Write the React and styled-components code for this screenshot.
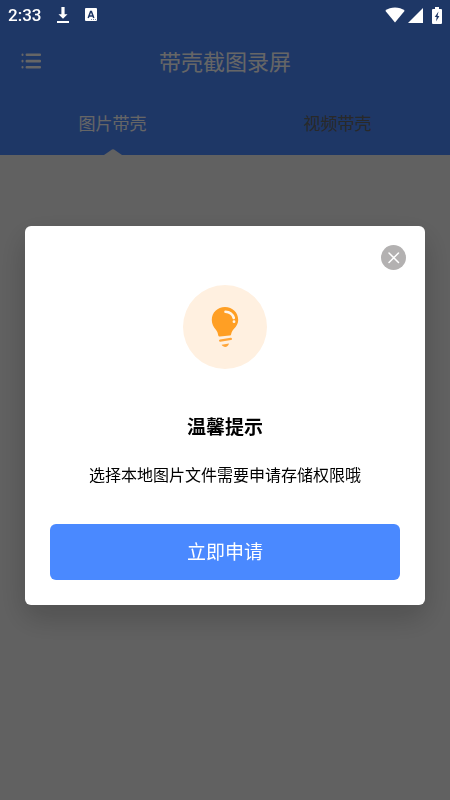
import styled, { createGlobalStyle } from "styled-components";

const GlobalStyle = createGlobalStyle`
    * {
        box-sizing: border-box;
    }
    body {
        margin: 0;
        background: #f2f2f2;
        font-family: "Noto Sans CJK SC", sans-serif;
    }
    button {
        border: none;
        padding: 0;
        font-family: inherit;
        cursor: pointer;
    }
`;

const StatusBar = styled.div`
    position: fixed;
    top: 0;
    left: 0;
    right: 0;
    z-index: 3;
    height: 30px;
    padding: 0 8px;
    display: flex;
    justify-content: space-between;
    align-items: center;
    color: white;
`;

const StatusGroup = styled.div`
    display: flex;
    align-items: center;
    gap: ${props => props.$gap};
`;

const Clock = styled.span`
    font-family: Roboto, sans-serif;
    font-size: 17px;
    font-weight: 500;
    line-height: 30px;
`;

const Header = styled.header`
    padding-top: 30px;
    background: #4d89ff;
`;

const TitleBar = styled.div`
    height: 62px;
    padding: 0 20px;
    display: grid;
    grid-template-columns: 24px 1fr 24px;
    align-items: center;
`;

const MenuButton = styled.button`
    height: 24px;
    display: flex;
    align-items: center;
    background: none;
    color: white;
`;

const AppTitle = styled.h1`
    margin: 0;
    padding-bottom: 2px;
    text-align: center;
    font-size: 22px;
    font-weight: 400;
    color: white;
`;

const Tabs = styled.nav`
    display: flex;
`;

const Tab = styled.button`
    position: relative;
    flex: 1;
    height: 63px;
    padding-bottom: 2px;
    background: none;
    font-size: 17px;
    color: ${props => props.$active ? "white" : "#666"};
`;

const TabArrow = styled.svg`
    position: absolute;
    left: 50%;
    bottom: 0;
    transform: translateX(-50%);
    display: block;
`;

const Overlay = styled.div`
    position: fixed;
    inset: 0;
    z-index: 2;
    padding: 30px 25px 0;
    display: flex;
    align-items: center;
    background: rgba(0, 0, 0, 0.6);
`;

const Dialog = styled.div`
    width: 100%;
    display: flex;
    flex-direction: column;
    background: white;
    border-radius: 6px;
    box-shadow: 0 12px 30px rgba(0, 0, 0, 0.2);
`;

const DialogTop = styled.div`
    padding: 19px 19px 15px;
    display: flex;
    justify-content: flex-end;
`;

const CloseButton = styled.button`
    width: 25px;
    height: 25px;
    display: flex;
    border-radius: 50%;
    background: #b3b1b1;
`;

const DialogBody = styled.div`
    padding: 0 25px 25px;
    display: flex;
    flex-direction: column;
    align-items: center;
`;

const BulbCircle = styled.div`
    width: 84px;
    height: 84px;
    border-radius: 50%;
    background: #fff0e0;
`;

const DialogTitle = styled.h2`
    margin: 43px 0 22px;
    font-size: 19px;
    line-height: 28px;
    font-weight: 700;
    color: black;
`;

const Message = styled.p`
    margin: 0 0 38px;
    font-size: 16px;
    line-height: 24px;
    color: black;
`;

const ApplyButton = styled.button`
    width: 100%;
    height: 56px;
    padding-bottom: 2px;
    border-radius: 6px;
    background: #4a89ff;
    font-size: 19px;
    color: white;
`;

function DownloadIcon() {
    return <svg width="14" height="18" viewBox="0 0 14 18" fill="currentColor">
        <path d="M5.4 1h3.2v7.2h2.9L7 12.7 2.5 8.2h2.9z" />
        <rect x="1" y="15" width="12" height="2" />
    </svg>;
}

function KeyboardIcon() {
    return <svg width="12" height="14" viewBox="0 0 12 14">
        <rect width="12" height="13" rx="1" fill="white" />
        <path d="M3.2 10 5.6 3.5h.8L8.8 10M4 8h4" fill="none" stroke="#1f3766" strokeWidth="1.5" />
        <path d="M6 11.5h1M8 11.5h1M10 11.5h1" stroke="#1f3766" strokeWidth="0.6" />
    </svg>;
}

function WifiIcon() {
    return <svg width="20" height="16" viewBox="0 0 20 16" fill="currentColor">
        <path d="M10 15.5.3 3.8C3 1.6 6.4.5 10 .5s7 1.1 9.7 3.3z" />
    </svg>;
}

function SignalIcon() {
    return <svg width="15" height="15" viewBox="0 0 15 15" fill="currentColor">
        <path d="M15 0v15H0z" />
    </svg>;
}

function BatteryIcon() {
    return <svg width="10" height="17" viewBox="0 0 10 17">
        <path d="M3 0h4v2h2a1 1 0 0 1 1 1v13a1 1 0 0 1-1 1H1a1 1 0 0 1-1-1V3a1 1 0 0 1 1-1h2z" fill="white" />
        <path d="M6.5 4.5 2.7 10h2L4 14.5 7.4 9H5.5z" fill="#1f3766" />
    </svg>;
}

function MenuIcon() {
    return <svg width="22" height="18" viewBox="0 0 22 18" fill="currentColor">
        {[1.5, 7.8, 14].map(y => <g key={y}>
            <rect x="1.5" y={y} width="2" height="2.6" rx="1" />
            <rect x="5.6" y={y} width="15.4" height="2.6" rx="1" />
        </g>)}
    </svg>;
}

function CloseIcon() {
    return <svg width="25" height="25" viewBox="0 0 25 25" stroke="white" strokeWidth="1.5" strokeLinecap="round">
        <path d="M8 8l9.5 9.5M17.5 8 8 17.5" />
    </svg>;
}

function BulbIcon() {
    return <svg width="84" height="84" viewBox="0 0 84 84" fill="none">
        <path d="M42 22C34.500 22 28.800 27.500 28.800 35C28.800 39 30.500 42 32.700 44.500C34.400 46.500 34.800 48.200 35.200 50.200C35.400 51.200 36 51.700 37 51.600L46.500 50.600C47.500 50.500 48 50 48.200 49C48.500 47.200 49.300 45.700 50.800 44C53.500 41.200 55.200 38.700 55.200 35C55.200 27.500 49.500 22 42 22Z" fill="#ff9f24" />
        <path d="M42.500 26.800C46.700 27 49.700 29.500 50.800 33" stroke="#fff5e8" strokeWidth="2.6" strokeLinecap="round" />
        <circle cx="51" cy="36.7" r="1.4" fill="#fff5e8" />
        <path d="M37.200 55.600L47.800 53.900" stroke="#ffa63a" strokeWidth="2.4" strokeLinecap="round" />
        <path d="M38.600 59.700L46 58.500C45.400 60.700 44 61.900 42.200 61.900C40.700 61.900 39.500 61.100 38.600 59.700Z" fill="#ffa63a" />
    </svg>;
}

export default function App() {
    return <>
        <GlobalStyle />
        <StatusBar>
            <StatusGroup $gap="15px">
                <Clock>2:33</Clock>
                <DownloadIcon />
                <KeyboardIcon />
            </StatusGroup>
            <StatusGroup $gap="9px">
                <StatusGroup $gap="3px">
                    <WifiIcon />
                    <SignalIcon />
                </StatusGroup>
                <BatteryIcon />
            </StatusGroup>
        </StatusBar>
        <Header>
            <TitleBar>
                <MenuButton aria-label="菜单"><MenuIcon /></MenuButton>
                <AppTitle>带壳截图录屏</AppTitle>
            </TitleBar>
            <Tabs>
                <Tab $active>
                    图片带壳
                    <TabArrow width="18" height="6" viewBox="0 0 18 6">
                        <path d="M0 6 8 .4Q9 0 10 .4L18 6z" fill="#f2f2f2" />
                    </TabArrow>
                </Tab>
                <Tab>视频带壳</Tab>
            </Tabs>
        </Header>
        <Overlay>
            <Dialog role="dialog" aria-modal="true" aria-labelledby="tip-title">
                <DialogTop>
                    <CloseButton aria-label="关闭"><CloseIcon /></CloseButton>
                </DialogTop>
                <DialogBody>
                    <BulbCircle><BulbIcon /></BulbCircle>
                    <DialogTitle id="tip-title">温馨提示</DialogTitle>
                    <Message>选择本地图片文件需要申请存储权限哦</Message>
                    <ApplyButton>立即申请</ApplyButton>
                </DialogBody>
            </Dialog>
        </Overlay>
    </>;
}
